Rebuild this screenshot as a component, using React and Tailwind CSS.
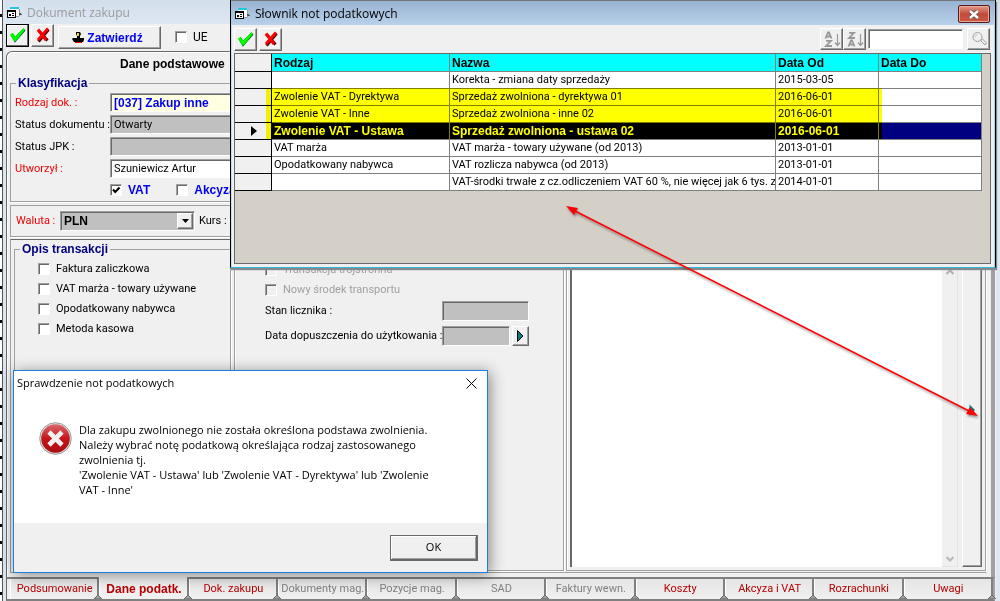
import { useState } from "react";

const notes = [
  { id: 1, kind: "", name: "Korekta - zmiana daty sprzedaży", from: "2015-03-05" },
  { id: 2, kind: "Zwolenie VAT - Dyrektywa", name: "Sprzedaż zwolniona - dyrektywa 01", from: "2016-06-01" },
  { id: 3, kind: "Zwolenie VAT - Inne", name: "Sprzedaż zwolniona - inne 02", from: "2016-06-01" },
  { id: 4, kind: "Zwolenie VAT - Ustawa", name: "Sprzedaż zwolniona - ustawa 02", from: "2016-06-01" },
  { id: 5, kind: "VAT marża", name: "VAT marża - towary używane (od 2013)", from: "2013-01-01" },
  { id: 6, kind: "Opodatkowany nabywca", name: "VAT rozlicza nabywca (od 2013)", from: "2013-01-01" },
  { id: 7, kind: "", name: "VAT-środki trwałe z cz.odliczeniem VAT 60 %, nie więcej jak 6 tys. z", from: "2014-01-01" },
];

const tabs = [
  { label: "Podsumowanie" },
  { label: "Dane podatk." },
  { label: "Dok. zakupu" },
  { label: "Dokumenty mag.", disabled: true },
  { label: "Pozycje mag.", disabled: true },
  { label: "SAD", disabled: true },
  { label: "Faktury wewn.", disabled: true },
  { label: "Koszty" },
  { label: "Akcyza i VAT" },
  { label: "Rozrachunki" },
  { label: "Uwagi" },
];

const strong = "font-['Liberation_Sans',Arial,sans-serif] text-xs leading-4 font-bold";
const raised = "border border-t-white border-l-white border-r-[#696969] border-b-[#696969] bg-[#f0f0f0] shadow-[inset_-1px_-1px_0_#a0a0a0]";
const sunken = "border border-t-[#a0a0a0] border-l-[#a0a0a0] border-r-white border-b-white shadow-[inset_1px_1px_0_#696969]";

function FormIcon() {
  return (
    <svg width="16" height="14" viewBox="0 0 16 14" className="shrink-0" shapeRendering="crispEdges">
      <path d="M3 1h9v9H3z" fill="#fff" />
      <path d="M3 1h9v2H3z" fill="#1ec8dc" />
      <path d="M12 3v7M9 10h3" stroke="#999" />
      <path d="M0 4h9v8H0z" fill="#000" />
      <path d="M1 6h7v5H1z" fill="#fff" />
      <path d="M2 8h2v2H2zM5 7h2v1H5zM5 9h2v1H5z" fill="#000" />
      <path d="M12 7h2v1h1v1h-3z" fill="#555" />
    </svg>
  );
}

function CheckIcon() {
  return (
    <svg width="18" height="17" viewBox="0 0 18 17">
      <path d="M3 9l3 5.500L16 3" fill="none" stroke="#063" strokeWidth="1.500" />
      <path d="M1.500 7.500l2.500-1 2 3.500L14.500 1.500l1 1L7 13.500H5z" fill="#0f0" stroke="#0e0" />
    </svg>
  );
}

function CrossIcon() {
  return (
    <svg width="18" height="17" viewBox="0 0 18 17">
      <path d="M4.500 3.500l9 10M14.500 2.500l-10 12" stroke="#400" strokeWidth="3" />
      <path d="M4 2.500l8 10.500M14 1.500L4 13" stroke="#f00" strokeWidth="3" />
    </svg>
  );
}

function StampIcon() {
  return (
    <svg width="13" height="12" viewBox="0 0 13 12" className="shrink-0">
      <path d="M4 0h4l1 2-1 2v2H5V4L4 2z" fill="#000" />
      <path d="M5 1h2v3H5z" fill="#e8d020" />
      <path d="M1 6h11v2l-1 2H2L0 7z" fill="#000" />
      <path d="M3 10h7v1H3z" fill="#e00" />
    </svg>
  );
}

function SortIcon({ down }) {
  return (
    <svg width="18" height="17" viewBox="0 0 18 17" fill="none" stroke="#999" strokeWidth="1.800">
      <path d={down ? "M3 1.800h5L3 7h6" : "M2.500 7.500L5 1.500h1L8.500 7.500M3.500 5.500h4"} />
      <path d={down ? "M2.500 15.500L5 9.500h1L8.500 15.500M3.500 13.500h4" : "M3 9.800h5L3 15h6"} />
      <path d="M14.500 3v11M12 11.500l2.500 3 2.500-3" strokeWidth="1.200" />
    </svg>
  );
}

function ErrorIcon() {
  return (
    <svg width="33" height="33" viewBox="0 0 33 33" className="shrink-0">
      <defs>
        <linearGradient id="err" x1="0" y1="0" x2="0" y2="1">
          <stop offset="0" stopColor="#dc6b6b" />
          <stop offset="0.500" stopColor="#c4161c" />
          <stop offset="1" stopColor="#a80d12" />
        </linearGradient>
      </defs>
      <circle cx="16.500" cy="16.500" r="15.800" fill="#ddd" stroke="#888" strokeWidth="0.800" />
      <circle cx="16.500" cy="16.500" r="14.300" fill="url(#err)" />
      <path d="M10 10l13 13M23 10L10 23" stroke="#f2f2f2" strokeWidth="4.600" />
    </svg>
  );
}

function ArrowButton() {
  return (
    <button aria-label="Wybierz datę" className={`flex h-5 w-[17px] items-center justify-center ${raised}`}>
      <svg width="7" height="12" viewBox="0 0 7 12">
        <path d="M0.500 0.500v11L6 6z" fill="#008080" stroke="#000" />
      </svg>
    </button>
  );
}

function Check({ label, bold, disabled, defaultChecked, className = "" }) {
  return (
    <label className={`flex items-center gap-1.5 whitespace-nowrap ${bold ? `text-[#0000f0] ${strong}` : ""} ${disabled ? "text-[#a0a0a0]" : ""} ${className}`}>
      <span className="relative flex">
        <input
          type="checkbox"
          disabled={disabled}
          defaultChecked={defaultChecked}
          className={`peer size-3 appearance-none ${sunken} ${disabled ? "bg-[#f0f0f0]" : "bg-white"}`}
        />
        <svg width="12" height="12" viewBox="0 0 12 12" className="pointer-events-none absolute inset-0 hidden peer-checked:block">
          <path d="M3 5.500l2.200 2.500L9.500 3.500" fill="none" stroke="#000" strokeWidth="2" />
        </svg>
      </span>
      {label}
    </label>
  );
}

function Field({ label, required, value = "", className }) {
  return (
    <label className="flex h-[19px] items-center">
      <span className={`w-[95px] shrink-0 whitespace-nowrap ${required ? "text-[#f00000]" : ""}`}>{label}</span>
      <input defaultValue={value} className={`h-full min-w-0 flex-1 px-[3px] outline-none ${sunken} ${className}`} />
    </label>
  );
}

function PurchaseDocument() {
  const [active, setActive] = useState("Dane podatk.");

  return (
    <div className="flex min-h-screen bg-white">
      {/* edge of the grid behind the window */}
      <div className="w-0.5 shrink-0 bg-[repeating-linear-gradient(#fff_0px,#fff_14px,#000_14px,#000_17px)]" />
      <div className="flex min-w-0 flex-1 flex-col border-l border-[#555] bg-[#f0f0f0] pl-0.5 shadow-[inset_3px_0_0_#dde7f2,inset_-4px_0_0_#dde7f2]">
        <div className="flex h-6 items-center gap-1 bg-linear-to-b from-[#d3dfec] to-[#dde7f2] pt-0.5 pl-0.5 font-['Open_Sans',sans-serif] text-xs text-[#9b9b9b]">
          <FormIcon />
          <h1>Dokument zakupu</h1>
        </div>
        <div className="flex h-[27px] items-start gap-0.5 pl-px">
          <button aria-label="Zapisz" className="flex h-[23px] w-[23px] items-center justify-center border border-black bg-[#f0f0f0] shadow-[inset_-1px_-1px_0_#696969,inset_1px_1px_0_#fff]">
            <CheckIcon />
          </button>
          <button aria-label="Anuluj" className={`flex h-[23px] w-[23px] items-center justify-center ${raised}`}>
            <CrossIcon />
          </button>
          <button className={`mt-0.5 ml-0.5 flex h-[23px] w-[103px] items-center justify-center gap-0.5 pr-1 text-[#0000f0] ${strong} ${raised}`}>
            <StampIcon />
            Zatwierdź
          </button>
          <Check label="UE" className="ml-3 h-[26px] text-xs" />
        </div>

        <div className="mr-[5px] ml-px flex flex-1 flex-col rounded-tl-md border-t border-r-4 border-l border-t-[#696969] border-r-[#a0a0a0] border-l-[#696969] pl-[3px] shadow-[inset_1px_1px_0_#fff]">
          <h2 className={`h-[23px] pt-1 pl-[110px] ${strong}`}>Dane podstawowe</h2>
          <fieldset className="mr-1 border border-[#a0a0a0] pb-0.5 pl-1 shadow-[1px_1px_0_#fff]">
            <legend className={`ml-px px-0.5 text-[#000080] ${strong}`}>Klasyfikacja</legend>
            <div className="flex flex-col gap-[3px] pt-0.5">
              <Field label="Rodzaj dok. :" required value="[037] Zakup inne" className={`bg-[#ffffe1] text-[#0000f0] ${strong}`} />
              <Field label="Status dokumentu :" value="Otwarty" className="bg-[#c0c0c0]" />
              <Field label="Status JPK :" className="bg-[#c0c0c0]" />
              <Field label="Utworzył :" required value="Szuniewicz Artur" className="bg-white" />
              <div className="flex h-[18px] gap-[26px] pl-[95px]">
                <Check label="VAT" bold defaultChecked />
                <Check label="Akcyza" bold />
              </div>
            </div>
          </fieldset>

          <div className="mt-[3px] mr-1 flex h-8 items-center border border-[#a0a0a0] px-[5px] shadow-[1px_1px_0_#fff]">
            <label htmlFor="currency" className="w-11 whitespace-nowrap text-[#f00000]">Waluta :</label>
            <div className={`relative h-5 w-[135px] ${sunken}`}>
              <select id="currency" className={`h-full w-full appearance-none bg-[#c0c0c0] px-[3px] shadow-[inset_1px_1px_0_#696969] outline-none ${strong}`}>
                <option>PLN</option>
              </select>
              <span className={`pointer-events-none absolute top-px right-px flex h-4 w-4 items-center justify-center ${raised}`}>
                <svg width="7" height="4" viewBox="0 0 7 4"><path d="M0 0h7L3.500 4z" /></svg>
              </span>
            </div>
            <span className="ml-1 whitespace-nowrap">Kurs :</span>
          </div>

          <div className="mt-0.5 mr-1 mb-1 flex flex-1 border border-t-[#696969] border-r-white border-b-[#a0a0a0] border-l-[#a0a0a0] pt-px pb-px pl-[3px]">
            <fieldset className="w-[217px] shrink-0 border border-[#a0a0a0] pt-0.5 pl-[23px] shadow-[1px_1px_0_#fff]">
              <legend className={`-ml-[18px] px-0.5 text-[#000080] ${strong}`}>Opis transakcji</legend>
              <Check label="Faktura zaliczkowa" className="h-5" />
              <Check label="VAT marża - towary używane" className="h-5" />
              <Check label="Opodatkowany nabywca" className="h-5" />
              <Check label="Metoda kasowa" className="h-5" />
            </fieldset>

            <div className="mt-2 ml-[3px] w-[330px] shrink-0 border border-[#a0a0a0] pt-2.5 pl-[30px] shadow-[1px_1px_0_#fff,inset_1px_0_0_#fff]">
              <Check label="Transakcja trójstronna" disabled className="h-5" />
              <Check label="Nowy środek transportu" disabled className="h-5" />
              <label className="flex h-[21px] items-center">
                <span className="w-[177px]">Stan licznika :</span>
                <input className={`h-5 w-[87px] bg-[#c0c0c0] ${sunken}`} />
              </label>
              <div className="mt-[5px] flex h-5 items-center">
                <label htmlFor="approval" className="w-[177px] whitespace-nowrap">Data dopuszczenia do użytkowania :</label>
                <input id="approval" className={`mr-0.5 h-5 w-[68px] bg-[#c0c0c0] ${sunken}`} />
                <ArrowButton />
              </div>
            </div>

            <div className="mt-2 ml-0.5 flex min-w-0 flex-1 border border-[#a0a0a0] p-[3px] shadow-[inset_1px_1px_0_#fff]">
              <textarea aria-label="Noty podatkowe" className="min-w-0 flex-1 resize-none border-t-2 border-l-2 border-[#696969] bg-white outline-none" />
              <div className="flex w-4 flex-col items-center justify-between border-r border-b border-[#e3e3e3] bg-[#f0f0f0] pt-4 pb-1">
                <svg width="8" height="6" viewBox="0 0 8 6" fill="none" stroke="#b0b0b0" strokeWidth="2"><path d="M0.500 5L4 1.500 7.500 5" /></svg>
                <svg width="8" height="6" viewBox="0 0 8 6" fill="none" stroke="#b8b8b8" strokeWidth="2"><path d="M0.500 1L4 4.500 7.500 1" /></svg>
              </div>
              <button aria-label="Słownik not" className={`ml-1 flex w-5 items-center justify-center ${raised}`}>
                <svg width="7" height="12" viewBox="0 0 7 12"><path d="M0.500 0.500v11L6 6z" fill="#008080" /></svg>
              </button>
            </div>
          </div>
        </div>

        <nav className="mr-[5px] ml-px flex h-6 border-t-2 border-r-2 border-b-2 border-l border-t-[#808080] border-r-[#a0a0a0] border-b-[#808080] border-l-[#696969] pl-[3px]">
          {tabs.map((tab) => (
            <button
              key={tab.label}
              disabled={tab.disabled}
              onClick={() => setActive(tab.label)}
              className={`relative min-w-0 flex-1 border-r-2 border-[#808080] pl-0.5 whitespace-nowrap shadow-[inset_1px_0_0_#fff] ${
                active === tab.label ? `-mt-0.5 bg-[#f0f0f0] pt-0.5 ${strong}` : "bg-linear-to-b from-[#e6e6e6] to-[#f0f0f0]"
              } ${tab.disabled ? "text-[#808080]" : "text-[#b80000]"}`}
            >
              {tab.label}
              <svg width="8" height="4" viewBox="0 0 8 4" className="absolute -right-[5px] bottom-0 z-10">
                <path d="M0 4l4-4 4 4z" fill="#a0a0a0" stroke="#696969" />
              </svg>
            </button>
          ))}
        </nav>
      </div>
    </div>
  );
}

function NoteDictionary() {
  const [selected, setSelected] = useState(4);

  return (
    <section className="absolute top-0 right-1 left-[230px] flex h-[268px] flex-col border-r border-b border-l border-r-black border-b-[#30b8dc] border-l-black bg-[#f0f0f0] shadow-[inset_-1px_0_0_#8fd8f0,inset_1px_0_0_#c8dcf0,1px_2px_1px_#888]">
      <header className="flex h-[25px] items-center gap-1 border-t border-[#777] bg-linear-to-b from-[#98b3d2] to-[#b9d1ea] pt-0.5 pr-[5px] pl-1 font-['Open_Sans',sans-serif] text-xs">
        <FormIcon />
        <h2 className="flex-1">Słownik not podatkowych</h2>
        <button aria-label="Zamknij" className="flex h-[18px] w-8 items-center justify-center rounded-xs border border-[#5a1a14] bg-linear-to-b from-[#e09a8c] via-[#c4493a] to-[#c85a45] shadow-[inset_0_0_0_1px_#e8a898]">
          <svg width="12" height="9" viewBox="0 0 12 9">
            <path d="M2 1l8 7M10 1L2 8" stroke="#555" strokeWidth="4" />
            <path d="M2 1l8 7M10 1L2 8" stroke="#fff" strokeWidth="2.400" />
          </svg>
        </button>
      </header>
      <div className="flex h-7 items-center gap-0.5 pr-[5px] pl-[3px]">
        <button aria-label="Wybierz" className={`flex h-[23px] w-[23px] items-center justify-center ${raised}`}><CheckIcon /></button>
        <button aria-label="Anuluj" className={`flex h-[23px] w-[23px] items-center justify-center ${raised}`}><CrossIcon /></button>
        <div className="ml-auto flex">
          <button aria-label="Sortuj rosnąco" className={`flex h-[22px] w-[23px] items-center justify-center ${raised}`}><SortIcon /></button>
          <button aria-label="Sortuj malejąco" className={`flex h-[22px] w-[23px] items-center justify-center ${raised}`}><SortIcon down /></button>
        </div>
        <input aria-label="Szukaj" className={`h-5 w-[95px] bg-white px-1 outline-none ${sunken}`} />
        <button aria-label="Znajdź" className={`ml-0.5 flex h-[22px] w-[23px] items-center justify-center ${raised}`}>
          <svg width="16" height="16" viewBox="0 0 16 16" fill="none" stroke="#a0a0a0">
            <circle cx="6.500" cy="6" r="4.500" />
            <path d="M4 5.500l2-2M10 9l1.500-1 4 4-1.500 2-4-4z" />
          </svg>
        </button>
      </div>
      <div className="relative mr-1 mb-[3px] ml-[3px] flex-1 overflow-hidden border border-[#696969] bg-[#d4d0c8]">
        <table className="w-full table-fixed border-separate border-spacing-0 pr-2 text-left whitespace-nowrap">
          <colgroup>
            <col className="w-[37px]" />
            <col className="w-[178px]" />
            <col />
            <col className="w-[103px]" />
            <col className="w-[103px]" />
          </colgroup>
          <thead>
            <tr className={`h-[18px] bg-[#00ffff] [&>th]:border-r [&>th]:border-b [&>th]:border-[#808080] [&>th]:px-0.5 [&>th]:py-0 ${strong}`}>
              <th className="border-black! bg-[#f0f0f0]" />
              <th>Rodzaj</th>
              <th>Nazwa</th>
              <th>Data Od</th>
              <th>Data Do</th>
            </tr>
          </thead>
          <tbody>
            {notes.map((note) => (
              <tr
                key={note.id}
                onClick={() => setSelected(note.id)}
                className={`h-[17px] [&>td]:overflow-hidden [&>td]:border-r [&>td]:border-b [&>td]:border-[#808080] [&>td]:py-0 [&>td]:pl-0.5 ${
                  selected === note.id ? `bg-[#000080] text-white ${strong}` : "bg-white"
                }`}
              >
                <td className="border-black! bg-[#f0f0f0]">
                  {selected === note.id && (
                    <svg width="6" height="10" viewBox="0 0 6 10" className="ml-3.5"><path d="M0 0l6 5-6 5z" fill="#000" /></svg>
                  )}
                </td>
                <td>{note.kind}</td>
                <td>{note.name}</td>
                <td>{note.from}</td>
                <td />
              </tr>
            ))}
          </tbody>
        </table>
        {/* marker stroke over the exemption rows */}
        <div className="pointer-events-none absolute top-[34px] right-[108px] left-[31px] h-[51px] bg-[#ffff00] mix-blend-multiply" />
      </div>
    </section>
  );
}

function MessageBox() {
  return (
    <section role="alertdialog" className="absolute top-[370px] left-[13px] flex h-[203px] w-[475px] flex-col border border-[#1a80d8] bg-white font-['Open_Sans',sans-serif] text-[11px] shadow-[2px_2px_14px_#00000070]">
      <header className="flex h-6 items-center justify-between pr-2.5 pl-[3px]">
        <h2>Sprawdzenie not podatkowych</h2>
        <button aria-label="Zamknij">
          <svg width="11" height="11" viewBox="0 0 11 11" stroke="#000"><path d="M0.500 0.500l10 10M10.500 0.500l-10 10" /></svg>
        </button>
      </header>
      <div className="flex flex-1 gap-[7px] pt-[27px] pl-[25px]">
        <ErrorIcon />
        <p className="leading-[15px] whitespace-nowrap">
          Dla zakupu zwolnionego nie została określona podstawa zwolnienia.<br />
          Należy wybrać notę podatkową określająca rodzaj zastosowanego<br />
          zwolnienia tj.<br />
          'Zwolenie VAT - Ustawa' lub 'Zwolenie VAT - Dyrektywa' lub 'Zwolenie<br />
          VAT - Inne'
        </p>
      </div>
      <footer className="flex h-[49px] items-center justify-end bg-[#f0f0f0] pr-[9px]">
        <button className="h-[26px] w-[88px] border border-r-2 border-b-2 border-[#696969] bg-[#f0f0f0] shadow-[inset_1px_1px_0_#fff,inset_-1px_-1px_0_#a0a0a0]">OK</button>
      </footer>
    </section>
  );
}

function App() {
  return (
    <main className="relative min-h-screen overflow-hidden font-[Roboto,sans-serif] text-[11px] leading-4 text-black">
      <PurchaseDocument />
      <NoteDictionary />
      <MessageBox />
      <svg width="414" height="214" viewBox="0 0 414 214" className="pointer-events-none absolute top-[205px] left-[565px] drop-shadow-[1px_2px_1px_#00000060]">
        <path d="M8 5l400 203" stroke="#f00" strokeWidth="1.600" />
        <path d="M1 1l12 2-4 7zM413 211l-12-2 4-7z" fill="#f00" />
      </svg>
    </main>
  );
}

export default App;
